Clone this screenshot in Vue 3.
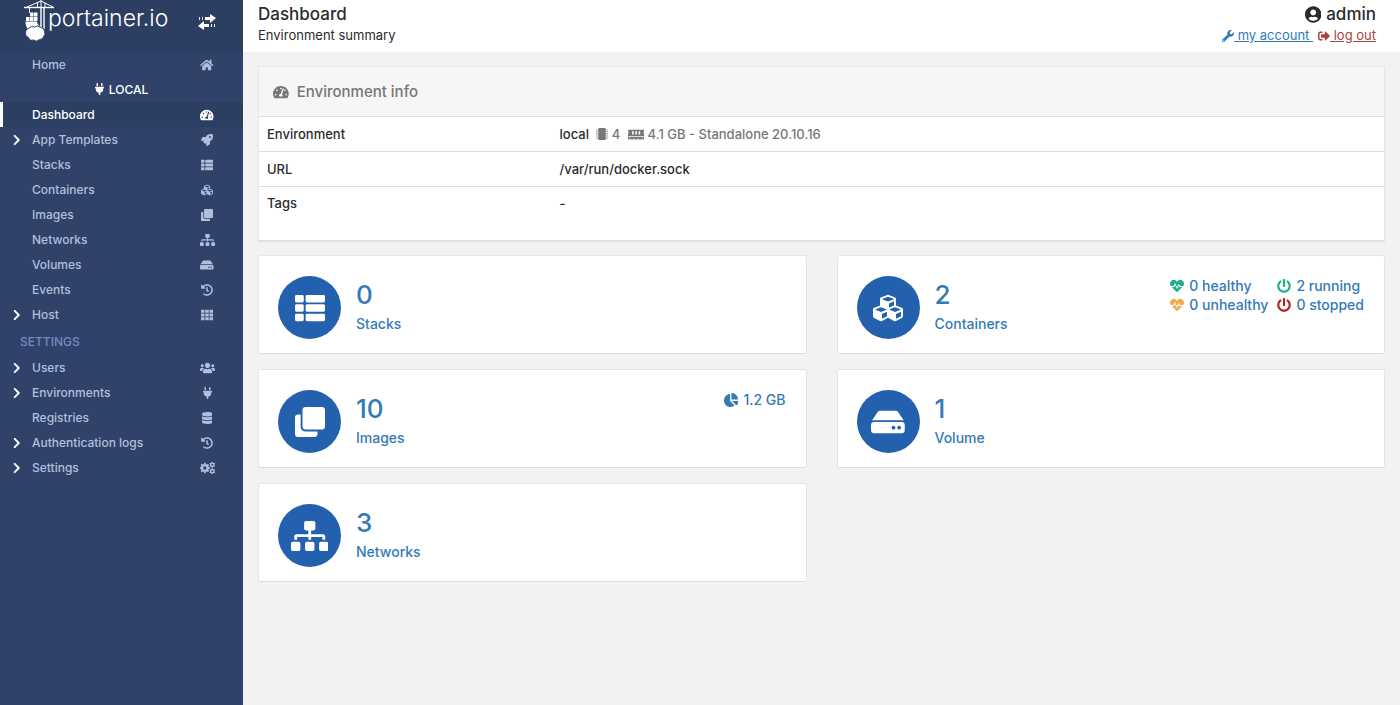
<script setup>
import { h } from 'vue'

const gear = (cx, cy, outer, inner, hole, teeth) => {
  const points = []
  const step = (Math.PI * 2) / teeth
  for (let i = 0; i < teeth; i++) {
    const a = i * step - Math.PI / 2
    const corners = [[-0.3, inner], [-0.2, outer], [0.2, outer], [0.3, inner]]
    for (const [t, r] of corners) {
      points.push(`${(cx + r * Math.cos(a + t * step)).toFixed(1)} ${(cy + r * Math.sin(a + t * step)).toFixed(1)}`)
    }
  }
  return `M${points.join('L')}ZM${cx - hole} ${cy}a${hole} ${hole} 0 1 0 ${hole * 2} 0a${hole} ${hole} 0 1 0 ${-hole * 2} 0Z`
}

const cells = (xs, ys, w, hgt) => ys.map((y) => xs.map((x) => `M${x} ${y}h${w}v${hgt}h${-w}z`).join('')).join('')

const icons = {
  home: [576, 'M280.37 148.26L96 300.11V464a16 16 0 0 0 16 16l112.06-.29a16 16 0 0 0 15.92-16V368a16 16 0 0 1 16-16h64a16 16 0 0 1 16 16v95.64a16 16 0 0 0 16 16.05L464 480a16 16 0 0 0 16-16V300L295.67 148.26a12.19 12.19 0 0 0-15.3 0zM571.6 251.47L488 182.56V44.05a12 12 0 0 0-12-12h-56a12 12 0 0 0-12 12v72.61L318.47 43a48 48 0 0 0-61 0L4.34 251.47a12 12 0 0 0-1.6 16.9l25.5 31A12 12 0 0 0 45.15 301l235.22-193.74a12.19 12.19 0 0 1 15.3 0L530.9 301a12 12 0 0 0 16.9-1.6l25.5-31a12 12 0 0 0-1.7-16.93z'],
  plug: [384, 'M320 32a32 32 0 0 0-64 0v96h64zm48 128H16A16 16 0 0 0 0 176v32a16 16 0 0 0 16 16h16v32a160.07 160.07 0 0 0 128 156.8V512h64v-99.2A160.07 160.07 0 0 0 352 256v-32h16a16 16 0 0 0 16-16v-32a16 16 0 0 0-16-16zM128 32a32 32 0 0 0-64 0v96h64z'],
  gauge: [576, 'M288 32C128.94 32 0 160.94 0 320c0 52.8 14.25 102.26 39.06 144.8 5.61 9.62 16.3 15.2 27.44 15.2h443c11.14 0 21.83-5.58 27.44-15.2C561.75 422.26 576 372.8 576 320c0-159.06-128.94-288-288-288zm0 64c14.71 0 26.58 10.13 30.32 23.65-1.11 2.26-2.64 4.23-3.45 6.67l-9.22 27.67c-5.13 3.49-10.97 6.01-17.64 6.01-17.67 0-32-14.33-32-32S270.33 96 288 96zM96 384c-17.67 0-32-14.33-32-32s14.33-32 32-32 32 14.33 32 32-14.33 32-32 32zm48-160c-17.67 0-32-14.33-32-32s14.33-32 32-32 32 14.33 32 32-14.33 32-32 32zm246.77-72.41l-61.33 184C343.13 347.33 352 364.54 352 384c0 11.72-3.38 22.55-8.88 32H232.88c-5.5-9.45-8.88-20.28-8.88-32 0-33.94 26.5-61.43 59.9-63.59l61.34-184.01c4.17-12.56 17.73-19.45 30.36-15.17 12.57 4.19 19.35 17.79 15.17 30.36zm14.66 57.2l15.52-46.55c3.47-1.29 7.13-2.23 11.05-2.23 17.67 0 32 14.33 32 32s-14.33 32-32 32c-11.38-.01-20.89-6.28-26.57-15.22zM480 384c-17.67 0-32-14.33-32-32s14.33-32 32-32 32 14.33 32 32-14.33 32-32 32z'],
  rocket: [512, 'M505.12 19.09c-1.19-5.53-6.66-11-12.21-12.19C460.72 0 435.51 0 410.41 0 307.18 0 245.27 55.2 199.05 128H94.84c-16.35.02-35.56 11.88-42.89 26.48L2.52 253.3A28.4 28.4 0 0 0 0 264a24 24 0 0 0 24 24h103.82l-22.48 22.47c-11.36 11.36-13 32.26 0 45.25l50.91 50.9c11.15 11.2 32.15 13.16 45.27 0l22.48-22.46V488a24 24 0 0 0 24 24 28.56 28.56 0 0 0 10.71-2.52l98.73-49.39c14.63-7.3 26.5-26.5 26.5-42.86V312.8C456.55 266.48 512 204.4 512 101.7c.07-25.2.07-50.4-6.88-82.61zM384.04 168a40 40 0 1 1 40-40 40.02 40.02 0 0 1-40 40z'],
  list: [512, 'M149.333 216v80c0 13.255-10.745 24-24 24H24c-13.255 0-24-10.745-24-24v-80c0-13.255 10.745-24 24-24h101.333c13.255 0 24 10.745 24 24zM0 376v80c0 13.255 10.745 24 24 24h101.333c13.255 0 24-10.745 24-24v-80c0-13.255-10.745-24-24-24H24c-13.255 0-24 10.745-24 24zM125.333 32H24C10.745 32 0 42.745 0 56v80c0 13.255 10.745 24 24 24h101.333c13.255 0 24-10.745 24-24V56c0-13.255-10.745-24-24-24zm80 448H488c13.255 0 24-10.745 24-24v-80c0-13.255-10.745-24-24-24H205.333c-13.255 0-24 10.745-24 24v80c0 13.255 10.745 24 24 24zm-24-424v80c0 13.255 10.745 24 24 24H488c13.255 0 24-10.745 24-24V56c0-13.255-10.745-24-24-24H205.333c-13.255 0-24 10.745-24 24zm24 264H488c13.255 0 24-10.745 24-24v-80c0-13.255-10.745-24-24-24H205.333c-13.255 0-24 10.745-24 24v80c0 13.255 10.745 24 24 24z'],
  cubes: [512, 'M488.6 250.2L392 214V105.5c0-15-9.3-28.4-23.4-33.7l-100-37.5c-8.1-3.1-17.1-3.1-25.3 0l-100 37.5c-14.1 5.3-23.4 18.7-23.4 33.7V214l-96.6 36.2C9.3 255.5 0 268.9 0 283.9V394c0 13.6 7.7 26.1 19.9 32.2l100 50c10.1 5.1 22.1 5.1 32.2 0l103.9-52 103.9 52c10.1 5.1 22.1 5.1 32.2 0l100-50c12.2-6.1 19.9-18.6 19.9-32.2V283.9c0-15-9.3-28.4-23.4-33.7zM358 214.8l-85 31.9v-68.2l85-37v73.3zM154 104.1l102-38.2 102 38.2v.6l-102 41.4-102-41.4v-.6zm84 291.1l-85 42.5v-79.1l85-38.8v75.4zm0-112l-102 41.4-102-41.4v-.6l102-38.2 102 38.2v.6zm240 112l-85 42.5v-79.1l85-38.8v75.4zm0-112l-102 41.4-102-41.4v-.6l102-38.2 102 38.2v.6z'],
  clone: [512, 'M464 0c26.51 0 48 21.49 48 48v288c0 26.51-21.49 48-48 48H176c-26.51 0-48-21.49-48-48V48c0-26.51 21.49-48 48-48h288M176 416c-44.112 0-80-35.888-80-80V128H48c-26.51 0-48 21.49-48 48v288c0 26.51 21.49 48 48 48h288c26.51 0 48-21.49 48-48v-48H176z'],
  sitemap: [640, 'M128 352H32c-17.67 0-32 14.33-32 32v96c0 17.67 14.33 32 32 32h96c17.67 0 32-14.33 32-32v-96c0-17.67-14.33-32-32-32zm-24-80h192v48h48v-48h192v48h48v-57.59c0-21.17-17.23-38.41-38.41-38.41H344v-64h40c17.67 0 32-14.33 32-32V32c0-17.67-14.33-32-32-32H256c-17.67 0-32 14.33-32 32v96c0 17.67 14.33 32 32 32h40v64H94.41C73.23 224 56 241.23 56 262.41V320h48v-48zm264 80h-96c-17.67 0-32 14.33-32 32v96c0 17.67 14.33 32 32 32h96c17.67 0 32-14.33 32-32v-96c0-17.67-14.33-32-32-32zm240 0h-96c-17.67 0-32 14.33-32 32v96c0 17.67 14.33 32 32 32h96c17.67 0 32-14.33 32-32v-96c0-17.67-14.33-32-32-32z'],
  disk: [576, 'M576 304v96c0 26.51-21.49 48-48 48H48c-26.51 0-48-21.49-48-48v-96c0-26.51 21.49-48 48-48h480c26.51 0 48 21.49 48 48zm-48-80a79.557 79.557 0 0 1 30.777 6.165L462.25 85.374A48.003 48.003 0 0 0 422.311 64H153.689a48 48 0 0 0-39.938 21.374L17.223 230.165A79.557 79.557 0 0 1 48 224h480zm-48 96c-17.673 0-32 14.327-32 32s14.327 32 32 32 32-14.327 32-32-14.327-32-32-32zm-96 0c-17.673 0-32 14.327-32 32s14.327 32 32 32 32-14.327 32-32-14.327-32-32-32z'],
  history: [512, 'M504 255.531c.253 136.64-111.18 248.372-247.82 248.468-59.015.042-113.223-20.53-155.822-54.911-11.077-8.94-11.905-25.541-1.839-35.607l11.267-11.267c8.609-8.609 22.353-9.551 31.891-1.984C173.062 425.135 212.781 440 256 440c101.705 0 184-82.311 184-184 0-101.705-82.311-184-184-184-48.814 0-93.149 18.969-126.068 49.932l50.754 50.754c10.08 10.08 2.941 27.314-11.313 27.314H24c-8.837 0-16-7.163-16-16V38.627c0-14.254 17.234-21.393 27.314-11.314l49.372 49.372C129.209 34.136 189.552 8 256 8c136.81 0 247.747 110.78 248 247.531zm-180.912 78.784l9.823-12.63c8.138-10.463 6.253-25.542-4.21-33.679L288 256.349V152c0-13.255-10.745-24-24-24h-16c-13.255 0-24 10.745-24 24v135.651l65.409 50.874c10.463 8.137 25.541 6.253 33.679-4.21z'],
  grid: [512, cells([0, 181, 362], [32, 192, 352], 150, 128)],
  users: [640, 'M96 224c35.3 0 64-28.7 64-64s-28.7-64-64-64-64 28.7-64 64 28.7 64 64 64zm448 0c35.3 0 64-28.7 64-64s-28.7-64-64-64-64 28.7-64 64 28.7 64 64 64zm32 32h-64c-17.6 0-33.5 7.1-45.1 18.6 40.3 22.1 68.9 62 75.1 109.4h66c17.7 0 32-14.3 32-32v-32c0-35.3-28.7-64-64-64zm-256 0c61.9 0 112-50.1 112-112S381.9 32 320 32 208 82.1 208 144s50.1 112 112 112zm76.8 32h-8.3c-20.8 10-43.9 16-68.5 16s-47.6-6-68.5-16h-8.3C179.6 288 128 339.6 128 403.2V432c0 26.5 21.5 48 48 48h288c26.5 0 48-21.5 48-48v-28.8c0-63.6-51.6-115.2-115.2-115.2zm-223.7-13.4C161.5 263.1 145.6 256 128 256H64c-35.3 0-64 28.7-64 64v32c0 17.7 14.3 32 32 32h65.9c6.3-47.4 34.9-87.3 75.2-109.4z'],
  database: [448, 'M448 73.143v45.714C448 159.143 347.667 192 224 192S0 159.143 0 118.857V73.143C0 32.857 100.333 0 224 0s224 32.857 224 73.143zM448 176v102.857C448 319.143 347.667 352 224 352S0 319.143 0 278.857V176c48.125 33.143 136.208 48.572 224 48.572S399.874 209.143 448 176zm0 160v102.857C448 479.143 347.667 512 224 512S0 479.143 0 438.857V336c48.125 33.143 136.208 48.572 224 48.572S399.874 369.143 448 336z'],
  cogs: [640, gear(206, 256, 222, 170, 72, 8) + gear(524, 118, 128, 96, 42, 6) + gear(524, 394, 128, 96, 42, 6)],
  user: [496, 'M248 8C111 8 0 119 0 256s111 248 248 248 248-111 248-248S385 8 248 8zm0 96c48.6 0 88 39.4 88 88s-39.4 88-88 88-88-39.4-88-88 39.4-88 88-88zm0 344c-58.7 0-111.3-26.6-146.5-68.2 18.8-35.4 55.6-59.8 98.5-59.8 2.4 0 4.8.4 7.1 1.1 13 4.2 26.6 6.9 40.9 6.9 14.3 0 28-2.7 40.9-6.9 2.3-.7 4.7-1.1 7.1-1.1 42.9 0 79.7 24.4 98.5 59.8C359.3 421.4 306.7 448 248 448z'],
  wrench: [512, 'M507.73 109.1c-2.24-9.03-13.54-12.09-20.12-5.51l-74.36 74.36-67.88-11.31-11.31-67.88 74.36-74.36c6.62-6.62 3.43-17.9-5.66-20.16-47.38-11.74-99.55.91-136.58 37.93-39.64 39.64-50.55 97.1-34.05 147.2L18.74 402.76c-24.99 24.99-24.99 65.51 0 90.5 24.99 24.99 65.51 24.99 90.5 0l213.21-213.21c50.12 16.71 107.47 5.68 147.37-34.22 37.07-37.07 49.7-89.32 37.91-136.73zM64 472c-13.25 0-24-10.75-24-24 0-13.26 10.75-24 24-24s24 10.74 24 24c0 13.25-10.75 24-24 24z'],
  signout: [512, 'M497 273L329 441c-15 15-41 4.5-41-17v-96H152c-13.3 0-24-10.7-24-24v-96c0-13.3 10.7-24 24-24h136V88c0-21.4 25.9-32 41-17l168 168c9.3 9.4 9.3 24.6 0 34zM192 436v-40c0-6.6-5.4-12-12-12H96c-17.7 0-32-14.3-32-32V160c0-17.7 14.3-32 32-32h84c6.6 0 12-5.4 12-12V76c0-6.6-5.4-12-12-12H96c-53 0-96 43-96 96v192c0 53 43 96 96 96h84c6.6 0 12-5.4 12-12z'],
  heart: [512, 'M320.2 243.8l-49.7 99.4c-6 12.1-23.4 11.7-28.9-.6l-56.9-126.3-30 71.7H60.6l182.5 186.5c7.1 7.3 18.6 7.3 25.7 0L451.4 288H342.3l-22.1-44.2zM473.7 73.9l-2.4-2.5c-51.5-52.6-135.8-52.6-187.4 0L256 100l-27.9-28.5c-51.5-52.7-135.9-52.7-187.4 0l-2.4 2.4C-10.4 123.7-12.5 203 31 256h102.4l35.9-86.2c5.4-12.9 23.6-13.1 29.2-.4l58.2 129.3 49-97.9c5.9-11.8 22.7-11.8 28.6 0l27.6 55.2H481c43.5-53 41.4-132.3-7.3-182.1z'],
  power: [512, 'M400 54.1c63 45 104 118.6 104 201.9 0 136.8-110.8 247.7-247.5 248C120 504.3 8.2 393 8 256.4 7.9 173.1 48.9 99.3 111.8 54.2c11.7-8.3 28-4.8 35 7.7L162.6 90c5.9 10.5 3.1 23.8-6.6 31-41.5 30.8-68 79.6-68 134.9-.1 92.3 74.5 168.1 168 168.1 91.6 0 168.6-74.2 168-169.1-.3-51.8-24.7-101.8-68.1-134-9.7-7.2-12.4-20.5-6.5-30.9l15.8-28.1c7-12.4 23.2-16.1 34.8-7.8zM296 264V24c0-13.3-10.7-24-24-24h-32c-13.3 0-24 10.7-24 24v240c0 13.3 10.7 24 24 24h32c13.3 0 24-10.7 24-24z'],
  pie: [544, 'M527.79 288H290.5l158.03 158.03c6.04 6.04 15.98 6.53 22.19.68 38.7-36.46 65.32-85.61 73.13-140.86 1.34-9.46-6.51-17.85-16.06-17.85zm-15.83-64.8C503.72 103.74 408.26 8.28 288.8.04 279.68-.59 272 7.1 272 16.24V240h223.77c9.14 0 16.82-7.68 16.19-16.8zM224 288V50.71c0-9.55-8.39-17.4-17.84-16.06C86.99 51.49-4.1 155.6.14 280.37 4.5 408.51 114.83 513.59 243.03 511.98c50.4-.63 96.97-16.87 135.26-44.03 7.9-5.6 8.42-17.23 1.57-24.08L224 288z'],
  chip: [512, 'M416 48v416c0 26.51-21.49 48-48 48H144c-26.51 0-48-21.49-48-48V48c0-26.51 21.49-48 48-48h224c26.51 0 48 21.49 48 48z' + cells([12, 444], [48, 138, 228, 318, 408], 56, 48)],
  memory: [640, 'M640 130.94V96c0-17.67-14.33-32-32-32H32C14.33 64 0 78.33 0 96v34.94c18.6 6.61 32 24.19 32 45.06s-13.4 38.45-32 45.06V320h640v-98.94c-18.6-6.61-32-24.19-32-45.06s13.4-38.45 32-45.06zM224 256h-64V128h64v128zm128 0h-64V128h64v128zm128 0h-64V128h64v128zM0 448h64v-26.67c0-8.84 7.16-16 16-16s16 7.16 16 16V448h128v-26.67c0-8.84 7.16-16 16-16s16 7.16 16 16V448h128v-26.67c0-8.84 7.16-16 16-16s16 7.16 16 16V448h128v-26.67c0-8.84 7.16-16 16-16s16 7.16 16 16V448h64v-96H0v96z'],
  chevron: [320, 'M285 239L91 45c-9-9-25-9-34 0L34 67c-9 10-9 25 0 34l154 155L34 411c-9 9-9 24 0 34l23 22c9 10 25 10 34 0l194-194c9-9 9-25 0-34z'],
}

const Icon = (props) =>
  h('svg', { class: 'icon', viewBox: `0 0 ${icons[props.name][0]} 512`, 'aria-hidden': 'true' }, [
    h('path', { d: icons[props.name][1], fill: 'currentColor', 'fill-rule': 'evenodd' }),
  ])
Icon.props = ['name']

const localLinks = [
  { label: 'Dashboard', icon: 'gauge', active: true },
  { label: 'App Templates', icon: 'rocket', expandable: true },
  { label: 'Stacks', icon: 'list' },
  { label: 'Containers', icon: 'cubes' },
  { label: 'Images', icon: 'clone' },
  { label: 'Networks', icon: 'sitemap' },
  { label: 'Volumes', icon: 'disk' },
  { label: 'Events', icon: 'history' },
  { label: 'Host', icon: 'grid', expandable: true },
]
const settingsLinks = [
  { label: 'Users', icon: 'users', expandable: true },
  { label: 'Environments', icon: 'plug', expandable: true },
  { label: 'Registries', icon: 'database' },
  { label: 'Authentication logs', icon: 'history', expandable: true },
  { label: 'Settings', icon: 'cogs', expandable: true },
]
const sections = [
  { key: 'home', links: [{ label: 'Home', icon: 'home' }] },
  { key: 'local', title: 'LOCAL', links: localLinks },
  { key: 'settings', title: 'SETTINGS', links: settingsLinks },
]

const cards = [
  { count: 0, label: 'Stacks', icon: 'list' },
  {
    count: 2,
    label: 'Containers',
    icon: 'cubes',
    stats: [
      { icon: 'heart', tone: 'green', text: '0 healthy' },
      { icon: 'power', tone: 'green', text: '2 running' },
      { icon: 'heart', tone: 'orange', text: '0 unhealthy' },
      { icon: 'power', tone: 'red', text: '0 stopped' },
    ],
  },
  { count: 10, label: 'Images', icon: 'clone', size: '1.2 GB' },
  { count: 1, label: 'Volume', icon: 'disk' },
  { count: 3, label: 'Networks', icon: 'sitemap' },
]
</script>

<template>
  <div class="page">
    <aside class="sidebar">
      <div class="brand">
        <a href="#" class="logo" aria-label="portainer.io">
          <svg class="crane" viewBox="0 0 32 42" aria-hidden="true">
            <g fill="none" stroke="#fff">
              <path stroke-width="1.400" d="M0 7.500h30" />
              <path d="M3 7L17 1L29 7M17 0v8M13.500 3v4M21 3v4M5.500 8v5" />
              <path stroke-width="1.400" d="M17 8v20M20 8v21" />
            </g>
            <path fill="#fff" d="M6 12.500h3.500v4H6zM10 12.500h3.500v4H10zM2 17h3.500v4H2zM6 17h3.500v4H6zM10 17h3.500v4H10zM1.500 21.500H13q0 3 2.500 4.500L12 29H4q-2.500-2.500-2.500-7.500z" />
            <path
              fill="#fff"
              stroke="#2d3e63"
              d="M4.500 28.500Q7 25.500 10.500 27Q14 24.500 16.500 27.500Q20.500 27.500 20.500 31.500Q22 34.500 19.500 36.500Q19 40 15.500 39.500Q12.500 42.500 9.500 40Q5.500 41 4.500 37.500Q1 36.500 1.500 33Q1 29.500 4.500 28.500Z"
            />
          </svg>
          <span class="wordmark">portainer.io</span>
        </a>
        <button type="button" class="toggle" aria-label="Toggle sidebar">
          <svg viewBox="0 0 18 16" width="18" height="16" aria-hidden="true">
            <path fill="#fff" d="M1 3h1v3H1zM4 3h1v3H4zM7 3h5V0l6 4-6 5V6H7zM16 10h1v3h-1zM13 10h1v3h-1zM11 10H6V7l-6 5 6 4v-3h5z" />
          </svg>
        </button>
      </div>
      <nav class="menu">
        <section v-for="section in sections" :key="section.key" :class="['group', section.key]">
          <h2 v-if="section.title" class="group-title">
            <Icon v-if="section.key === 'local'" name="plug" />{{ section.title }}
          </h2>
          <ul>
            <li v-for="link in section.links" :key="link.label">
              <a href="#" :class="['menu-link', { active: link.active }]">
                <span class="arrow"><Icon v-if="link.expandable" name="chevron" /></span>
                <span class="menu-label">{{ link.label }}</span>
                <span class="menu-icon"><Icon :name="link.icon" /></span>
              </a>
            </li>
          </ul>
        </section>
      </nav>
    </aside>

    <div class="content">
      <header class="topbar">
        <div>
          <h1>Dashboard</h1>
          <p class="subtitle">Environment summary</p>
        </div>
        <div class="account">
          <div class="username"><Icon name="user" />admin</div>
          <div class="account-links">
            <a href="#"><Icon name="wrench" /> my account </a>
            <a href="#" class="logout"><Icon name="signout" /> log out</a>
          </div>
        </div>
      </header>

      <main>
        <section class="panel">
          <h2 class="panel-title"><Icon name="gauge" />Environment info</h2>
          <table>
            <tbody>
              <tr>
                <th scope="row">Environment</th>
                <td>
                  local
                  <span class="details"><Icon name="chip" /> 4 <Icon name="memory" class="memory" /> 4.1 GB - Standalone 20.10.16</span>
                </td>
              </tr>
              <tr>
                <th scope="row">URL</th>
                <td>/var/run/docker.sock</td>
              </tr>
              <tr class="tags">
                <th scope="row">Tags</th>
                <td>-</td>
              </tr>
            </tbody>
          </table>
        </section>

        <div class="cards">
          <a v-for="card in cards" :key="card.label" href="#" class="card">
            <span class="badge"><Icon :name="card.icon" /></span>
            <span class="summary">
              <span class="count">{{ card.count }}</span>
              <span class="label">{{ card.label }}</span>
            </span>
            <span v-if="card.stats" class="stats">
              <span v-for="stat in card.stats" :key="stat.text" class="stat"><Icon :name="stat.icon" :class="stat.tone" />{{ stat.text }}</span>
            </span>
            <span v-if="card.size" class="size stat"><Icon name="pie" />{{ card.size }}</span>
          </a>
        </div>
      </main>
    </div>
  </div>
</template>

<style>
body {
  margin: 0;
  background: #f2f2f2;
}
</style>

<style scoped>
.page {
  display: flex;
  min-height: 100vh;
  font: 500 13px/20px Inter, "Open Sans", sans-serif;
  color: #2b2b2b;
}
h1, h2, p, ul {
  margin: 0;
  padding: 0;
  font-weight: 500;
}
ul {
  list-style: none;
}
a {
  color: #337ab7;
}
.icon {
  height: 12px;
  flex: none;
  vertical-align: -1px;
}

.sidebar {
  width: 243px;
  flex: none;
  background: #30426a;
}
.brand {
  display: flex;
  justify-content: space-between;
  align-items: flex-start;
  height: 52px;
  box-sizing: border-box;
  padding: 0 27px 0 24px;
  background: #2d3e63;
}
.logo {
  display: flex;
  color: #fff;
  text-decoration: none;
}
.crane {
  width: 32px;
  height: 42px;
  margin-right: -8px;
}
.wordmark {
  font: 300 23px/36px Inter, Lato, sans-serif;
}
.toggle {
  display: flex;
  margin-top: 14px;
  padding: 0;
  border: 0;
  background: none;
}
.group-title {
  height: 25px;
  font-size: 12px;
  line-height: 25px;
}
.local .group-title {
  color: #fff;
  text-align: center;
}
.local .group-title .icon {
  margin-right: 5px;
}
.settings .group-title {
  margin: 2px 0 1px;
  padding-left: 20px;
  color: #738bc0;
}
.menu-link {
  display: flex;
  align-items: center;
  height: 25px;
  padding-right: 26px;
  border-left: 3px solid transparent;
  font-size: 12px;
  color: #b2bfdc;
  text-decoration: none;
}
.menu-link.active {
  border-color: #fff;
  background: #2d3e63;
  color: #fff;
}
.arrow {
  display: flex;
  width: 19px;
  padding-left: 10px;
  color: #fff;
}
.menu-label {
  flex: 1;
}
.menu-icon {
  display: flex;
  justify-content: center;
  width: 20px;
}

.content {
  flex: 1;
  min-width: 0;
}
.topbar {
  display: flex;
  justify-content: space-between;
  height: 52px;
  box-sizing: border-box;
  padding: 4px 24px 0 15px;
  background: #fff;
}
h1, .username {
  font-size: 17px;
  line-height: 20px;
}
.subtitle, .account-links {
  font-weight: 400;
  line-height: 22px;
}
.account {
  text-align: right;
}
.username .icon {
  height: 17px;
  margin-right: 5px;
  vertical-align: -3px;
}
.account-links {
  display: flex;
  gap: 5px;
  white-space: pre;
}
.account-links .icon {
  vertical-align: -2px;
}
.logout {
  color: #a94442;
}
main {
  padding: 14px 15px;
}
.panel {
  border: 1px solid #e6e6e6;
  border-bottom-color: #ddd;
  background: #fff;
  box-shadow: 0 1px 1px #e6e6e6;
}
.panel-title {
  display: flex;
  align-items: center;
  gap: 8px;
  height: 49px;
  padding: 0 14px;
  border-bottom: 1px solid #e0e0e0;
  background: #f6f6f6;
  font-size: 15px;
  color: #777;
}
.panel-title .icon {
  height: 14px;
}
table {
  width: 100%;
  border-collapse: collapse;
  table-layout: fixed;
}
th, td {
  padding: 7px 8px;
  font-weight: 500;
  text-align: left;
  vertical-align: top;
}
th {
  width: 26%;
  box-sizing: border-box;
}
tr + tr {
  border-top: 1px solid #ddd;
}
.tags th, .tags td {
  padding-top: 6px;
  padding-bottom: 27px;
}
.details {
  margin-left: 4px;
  color: #777;
}
.memory {
  height: 13px;
  margin-left: 4px;
  vertical-align: -2px;
}

.cards {
  display: grid;
  grid-template-columns: 1fr 1fr;
  gap: 15px 30px;
  margin-top: 14px;
}
.card {
  display: flex;
  align-items: flex-start;
  padding: 20px 20px 14px 19px;
  border: 1px solid #e6e6e6;
  border-bottom-color: #ddd;
  border-radius: 2px;
  background: #fff;
  font-size: 14px;
  text-decoration: none;
}
.badge {
  display: flex;
  align-items: center;
  justify-content: center;
  width: 63px;
  height: 63px;
  margin-right: 15px;
  border-radius: 50%;
  background: #2361ae;
  color: #fff;
}
.badge .icon {
  height: 30px;
}
.summary {
  flex: 1;
  display: flex;
  flex-direction: column;
}
.count {
  font-size: 26px;
  line-height: 38px;
}
.label {
  line-height: 20px;
}
.stats {
  display: grid;
  grid-template-columns: auto auto;
  column-gap: 9px;
}
.stat {
  display: flex;
  align-items: center;
  gap: 5px;
  line-height: 19px;
}
.stat .icon {
  height: 14px;
}
.green {
  color: #23ae89;
}
.orange {
  color: #f0ad4e;
}
.red {
  color: #ae2323;
}
</style>
